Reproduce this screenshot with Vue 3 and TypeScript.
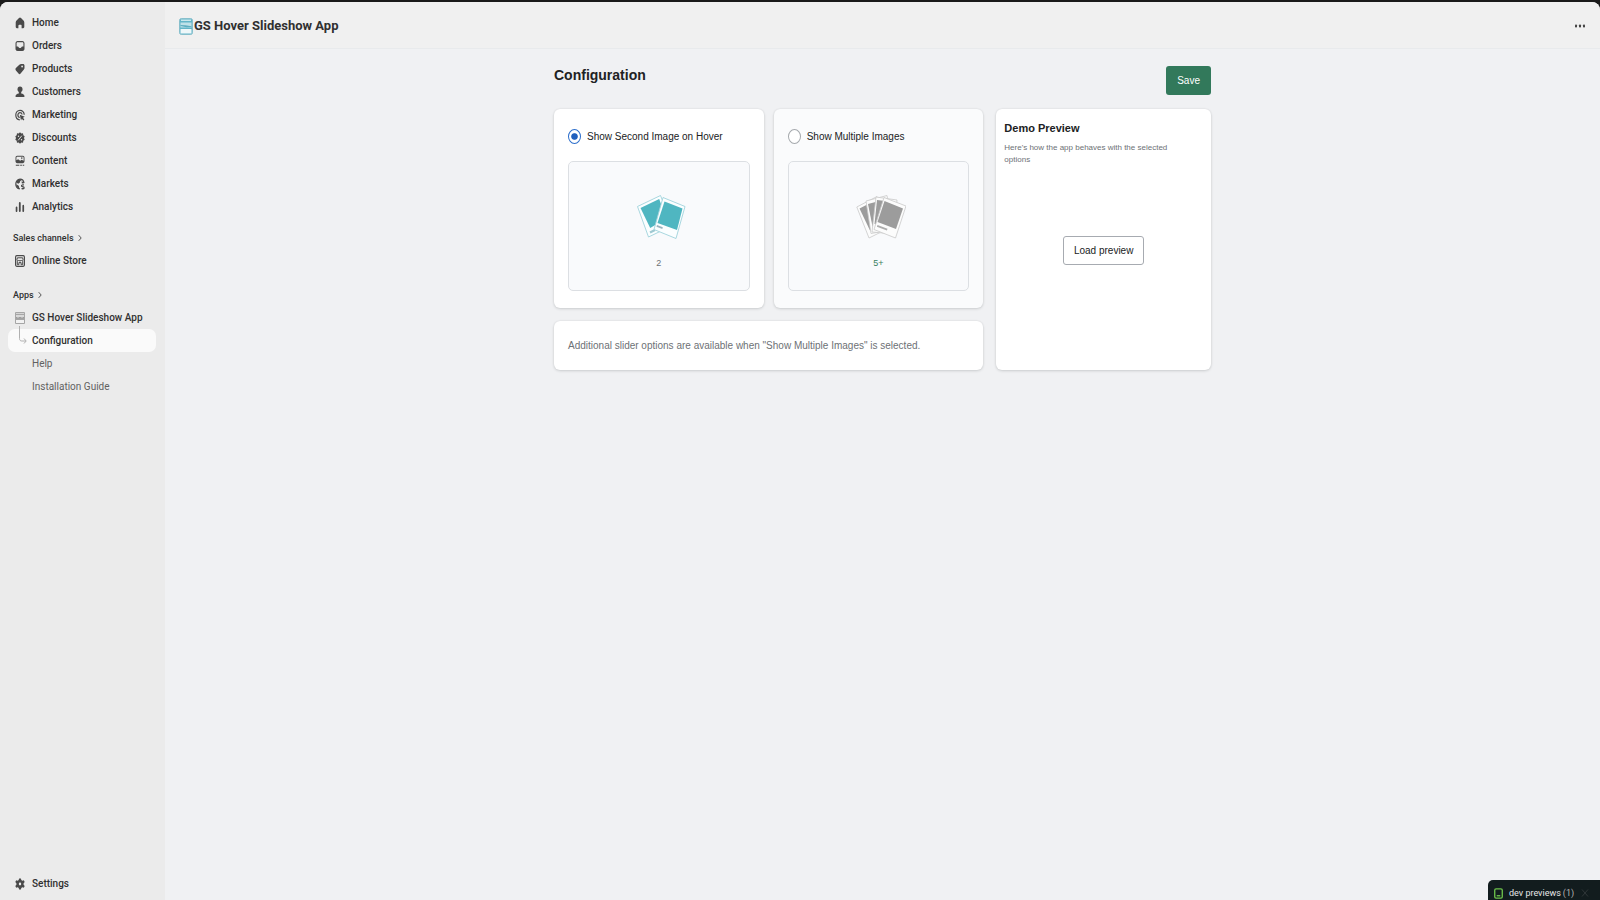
<script setup lang="ts">
import { ref } from 'vue'

interface NavItem {
  label: string
  icon: string
}

const mainNav: NavItem[] = [
  { label: 'Home', icon: 'home' },
  { label: 'Orders', icon: 'orders' },
  { label: 'Products', icon: 'products' },
  { label: 'Customers', icon: 'customers' },
  { label: 'Marketing', icon: 'marketing' },
  { label: 'Discounts', icon: 'discounts' },
  { label: 'Content', icon: 'content' },
  { label: 'Markets', icon: 'markets' },
  { label: 'Analytics', icon: 'analytics' },
]

const mode = ref<'hover' | 'multiple'>('hover')
</script>

<template>
  <div class="shell">
    <div class="frame">
      <aside class="sidebar">
        <nav class="nav" aria-label="Main">
          <a v-for="item in mainNav" :key="item.icon" href="#" class="nav-item">
            <svg class="icon" viewBox="0 0 10 12" aria-hidden="true">
              <path v-if="item.icon === 'home'" d="M4 .9a1.5 1.5 0 0 1 2 0l2.5 2.6c.5.5.8 1.3.8 2.1v4.2c0 .8-.5 1.4-1.2 1.4H6.600V8.700c0-.6-.4-1-.9-1H4.300c-.5 0-.9.4-.9 1v2.500H1.900C1.200 11.200.7 10.600.7 9.800V5.600c0-.8.3-1.600.8-2.100z" />
              <path v-else-if="item.icon === 'orders'" fill-rule="evenodd" d="M2.600 1h4.800C8.600 1 9.500 2 9.500 3.300v5.400C9.500 10 8.600 11 7.400 11H2.600C1.400 11 .5 10 .5 8.700V3.300C.5 2 1.400 1 2.600 1zm0 1.200c-.6 0-1 .5-1 1.100v3.200h1.200c.4 0 .6.300.8.700.2.400.6.700 1 .7h.8c.4 0 .8-.3 1-.7.2-.4.400-.7.800-.7h1.200V3.300c0-.6-.4-1.100-1-1.100z" />
              <path v-else-if="item.icon === 'products'" fill-rule="evenodd" d="M6.300.9h1.800c.8 0 1.400.7 1.400 1.600v2.300c0 .7-.2 1.300-.6 1.800l-3.300 4c-.6.700-1.500.700-2.100 0L.900 7.500c-.6-.7-.6-1.700 0-2.400l3.400-3.400c.6-.5 1.200-.8 2-.8zm.8 3.500a.9 1 0 1 0 0-2 .9 1 0 0 0 0 2z" />
              <g v-else-if="item.icon === 'customers'">
                <ellipse cx="5" cy="3.300" rx="2.500" ry="2.800" />
                <path d="M3.800 5.500h2.400v2c1.900.3 3.300 1.200 3.300 2.700 0 .5-.3.900-.8.900H1.300c-.5 0-.8-.4-.8-.9 0-1.500 1.400-2.400 3.300-2.700z" />
              </g>
              <g v-else-if="item.icon === 'marketing'">
                <path class="stroke" d="M4.800 10.800C2.500 10.700.8 8.700.8 6.100c0-2.700 1.800-4.800 4.200-4.800s4.200 2 4.200 4.400M4.800 8.500C3.700 8.400 2.900 7.400 2.900 6.100c0-1.400.9-2.500 2.100-2.500 1 0 1.900.8 2.100 1.900" />
                <path d="M4.800 5.800l5 2-1.900 1 1.500 1.800-1 1-1.600-1.900-.8 1.900z" />
              </g>
              <g v-else-if="item.icon === 'discounts'">
                <path d="M5 .3l1.300 1.200 1.700-.2.300 1.900 1.400 1L9 6l.7 1.800-1.400 1-.3 1.900-1.700-.2L5 11.700l-1.300-1.200-1.700.2-.3-1.900-1.400-1L1 6 .3 4.200l1.400-1L2 1.300l1.700.2z" />
                <path class="cut" d="M3.200 8.300l3.600-4.600" />
                <circle class="hole" cx="3.500" cy="4.200" r=".7" />
                <circle class="hole" cx="6.500" cy="7.800" r=".7" />
              </g>
              <g v-else-if="item.icon === 'content'">
                <path fill-rule="evenodd" d="M2.200.8h5.600c1 0 1.700.8 1.700 1.900v3.600c0 1.100-.7 1.900-1.700 1.900H2.200C1.200 8.200.5 7.400.5 6.300V2.700C.5 1.600 1.200.8 2.200.8zm0 1c-.4 0-.8.4-.8.900v2.500l1.700-1 2.100 1.500 1.500-1 1.900 1V2.700c0-.5-.4-.9-.8-.9z" />
                <circle cx="6.800" cy="3.100" r=".8" />
                <path d="M.8 9.700h3.500v1.100H.8zM5.200 9.700h1.700v1.100H5.200zM7.700 9.700h1.500v1.100H7.700z" />
              </g>
              <g v-else-if="item.icon === 'markets'">
                <path class="stroke" d="M9 5C8.700 2.900 7 1.200 5 1.200 2.700 1.200.8 3.400.8 6s1.700 4.600 4 4.800" />
                <path d="M1.200 4.500l2.100 1.300 1.600-1.200.3-1.700L7 1.900 4.700.9 2.200 2zM1.400 6.200l2.300 1.500.9 3.200-1.800-.6-1.600-2.600zM6.500 3.400l2 .4.700 1.400-2.300.3z" />
                <path class="stroke" d="M8.900 6.900H7.400c-.6 0-.9.400-.9.900s.3.800.8.900l1 .2c.5.1.8.4.8.9s-.4.900-.9.900H6.500M7.800 6.200v.7M7.800 10.700v.8" />
              </g>
              <path v-else d="M4.800 1c.6 0 .9.400.9 1v8c0 .6-.3 1-.9 1s-.9-.4-.9-1V2c0-.6.3-1 .9-1zM1.600 5.500c.5 0 .8.400.8 1V10c0 .6-.3 1-.8 1s-.9-.4-.9-1V6.500c0-.6.4-1 .9-1zM8.300 3.700c.5 0 .8.400.8 1V10c0 .6-.3 1-.8 1s-.9-.4-.9-1V4.700c0-.6.4-1 .9-1z" />
            </svg>
            <span>{{ item.label }}</span>
          </a>
        </nav>

        <section class="nav-group channels">
          <a href="#" class="group-title">
            Sales channels
            <svg class="chevron" viewBox="0 0 4 8" aria-hidden="true"><path d="M.7 1.200L3.200 4 .7 6.800" /></svg>
          </a>
          <a href="#" class="nav-item">
            <svg class="icon" viewBox="0 0 10 12" aria-hidden="true">
              <rect class="stroke" x=".6" y=".7" width="8.800" height="10.600" rx="1.200" />
              <path class="stroke thin" d="M2.400 2.800h5.200l.5 2c0 1.300-1.500 1.300-1.600.2-.1 1.200-2.900 1.200-3 0-.1 1.100-1.600 1.100-1.600-.2zM2.300 6.200v3.500h1.600V7.600h2.200v2.100h1.600V6.200" />
            </svg>
            <span>Online Store</span>
          </a>
        </section>

        <section class="nav-group">
          <a href="#" class="group-title">
            Apps
            <svg class="chevron" viewBox="0 0 4 8" aria-hidden="true"><path d="M.7 1.200L3.200 4 .7 6.800" /></svg>
          </a>
          <a href="#" class="nav-item">
            <svg class="icon" viewBox="0 0 10 12" aria-hidden="true">
              <rect x="0" y="0" width="10" height="12" rx="1" fill="#a6a6a6" />
              <rect x="1" y="1" width="8" height="1" fill="#d4d4d4" />
              <rect x="1" y="3" width="8" height="4" fill="#d9d9d9" />
              <path d="M1 5l2 .8L5 5l2 .8L9 5v1.700H1z" fill="#909090" />
              <rect x="1" y="8" width="8" height="3" fill="#f2f2f2" />
            </svg>
            <span>GS Hover Slideshow App</span>
          </a>
          <a href="#" class="nav-item sub active" aria-current="page">
            <svg class="branch" viewBox="0 0 10 20" aria-hidden="true">
              <path d="M1.500 0v12.500c0 1.500.8 2.500 2.300 2.500h4M6 12.500L8.200 15 6 17.500" />
            </svg>
            <span>Configuration</span>
          </a>
          <a href="#" class="nav-item sub">Help</a>
          <a href="#" class="nav-item sub">Installation Guide</a>
        </section>

        <a href="#" class="nav-item settings">
          <svg class="icon" viewBox="0 0 10 12" aria-hidden="true">
            <path fill-rule="evenodd" d="M4.100.5h1.800l.4 1.600 1 .6 1.500-.5.9 1.800-1.100 1.300v1.400l1.100 1.300-.9 1.800-1.500-.5-1 .6-.4 1.600H4.100l-.4-1.600-1-.6-1.500.5L.3 8l1.100-1.300V5.300L.3 4l.9-1.800 1.500.5 1-.6zM5 7.400A1.200 1.400 0 1 0 5 4.600a1.200 1.400 0 0 0 0 2.800z" />
          </svg>
          <span>Settings</span>
        </a>
      </aside>

      <main class="main">
        <header class="topbar">
          <svg class="app-logo" viewBox="0 0 14 17" aria-hidden="true">
            <rect x=".5" y=".5" width="13" height="16" rx="2" fill="#63b5c8" stroke="#87bfcc" />
            <rect x="2" y="1.500" width="10" height="1.500" fill="#cae7ec" />
            <rect x="1.500" y="4.500" width="11" height="5" fill="#bfe1e8" />
            <path d="M1.500 7l5 .2 6 1V9l-5 .2-6-1.200z" fill="#5eaec1" />
            <rect x="1.500" y="11" width="11" height="4.500" rx=".5" fill="#eef7f9" />
          </svg>
          <h1>GS Hover Slideshow App</h1>
          <button class="more" type="button" aria-label="More actions">
            <svg viewBox="0 0 10 4" aria-hidden="true">
              <rect x="0" y=".5" width="2" height="3" rx=".8" />
              <rect x="4" y=".5" width="2" height="3" rx=".8" />
              <rect x="8" y=".5" width="2" height="3" rx=".8" />
            </svg>
          </button>
        </header>

        <div class="page">
          <div class="page-head">
            <h2>Configuration</h2>
            <button class="save" type="button">Save</button>
          </div>

          <div class="columns">
            <div class="options">
              <div class="card option">
                <label class="choice">
                  <input v-model="mode" type="radio" name="mode" value="hover" />
                  Show Second Image on Hover
                </label>
                <div class="sample">
                  <svg class="photos" viewBox="0 0 50 46" aria-hidden="true">
                    <g stroke="#9fd3db" stroke-width=".9" fill="#fbfeff">
                      <path d="M1.500 12.500L24.500 1.500l12 30-24 11.500z" />
                      <path d="M4.500 14L23.200 5l7 19.500L14.200 34z" fill="#4fb6c1" stroke="none" />
                      <path d="M13.500 37.500l5-2.400 1 1.800-5 2.500z" fill="#9fc9d2" stroke="none" />
                      <path d="M27 3.500L49 12.500l-9 32L18 35.500z" />
                      <path d="M28.500 7.500l18 7-5.500 21.500L21.500 29z" fill="#4fb6c1" stroke="none" />
                      <path d="M21 31l5.800 2.300-.5 1.800-5.800-2.300z" fill="#9ab3be" stroke="none" />
                    </g>
                  </svg>
                  <span class="count">2</span>
                </div>
              </div>

              <div class="card option muted">
                <label class="choice">
                  <input v-model="mode" type="radio" name="mode" value="multiple" />
                  Show Multiple Images
                </label>
                <div class="sample">
                  <svg class="photos" viewBox="0 0 50 46" aria-hidden="true">
                    <g stroke="#c9c9c9" stroke-width=".8" fill="#fcfcfc">
                      <path d="M.8 13L21 2.500l13 31-21 10.500z" />
                      <path d="M3.500 14.500L20 6l8 20-14 10.500z" fill="#9c9c9c" stroke="none" />
                      <path d="M10 7L31 1.500l6 34-22 4z" />
                      <path d="M12 10l17-4.500 5 24-17.500 3z" fill="#9c9c9c" stroke="none" />
                      <path d="M20 3l21 3-3 34-22-2z" />
                      <path d="M21 6l17 2-3 24-16.500-2z" fill="#9c9c9c" stroke="none" />
                      <path d="M28 3.500l22 8.500-10.500 32L18 35.500z" />
                      <path d="M28.500 7l18.500 7.500-7 20.500-18.500-7z" fill="#9c9c9c" stroke="none" />
                      <path d="M21.500 31l10 3.800-.6 1.800-10-3.800z" fill="#adadad" stroke="none" />
                    </g>
                  </svg>
                  <span class="count green">5+</span>
                </div>
              </div>

              <p class="card note">Additional slider options are available when "Show Multiple Images" is selected.</p>
            </div>

            <section class="card preview">
              <h3>Demo Preview</h3>
              <p>Here's how the app behaves with the selected options</p>
              <div class="stage">
                <button class="load" type="button">Load preview</button>
              </div>
            </section>
          </div>
        </div>
      </main>
    </div>

    <div class="dev-bar">
      <svg viewBox="0 0 10 12" aria-hidden="true">
        <rect x=".8" y=".8" width="8.400" height="10.400" rx="1.500" />
        <path d="M3 8.500h4" />
      </svg>
      <span>dev previews</span>
      <span class="dev-count">(1)</span>
      <button type="button" aria-label="Close">
        <svg viewBox="0 0 8 10" aria-hidden="true"><path d="M1 1.500l6 7M7 1.500l-6 7" /></svg>
      </button>
    </div>
  </div>
</template>

<style>
body {
  margin: 0;
  background: #1a1a1a;
}
</style>

<style scoped>
.shell {
  box-sizing: border-box;
  min-height: 100vh;
  padding-top: 2px;
  display: flex;
  background: #1a1a1a;
  font-family: 'Liberation Sans', Arial, sans-serif;
  font-size: 10px;
  line-height: 16px;
  color: #303030;
}

.frame {
  flex: 1;
  display: flex;
  border-radius: 8px 8px 0 0;
  overflow: hidden;
  background: #f0f1f3;
}

a {
  color: inherit;
  text-decoration: none;
}

button {
  font: inherit;
  cursor: pointer;
}

h1, h2, h3, p {
  margin: 0;
}

.sidebar,
.topbar,
.dev-bar {
  font-family: Roboto, 'Liberation Sans', sans-serif;
}

.sidebar {
  box-sizing: border-box;
  flex: 0 0 165px;
  display: flex;
  flex-direction: column;
  padding: 9px 8px 5px;
  background: #ebebeb;
  white-space: nowrap;
}

.nav-item {
  display: flex;
  align-items: center;
  gap: 7px;
  height: 23px;
  padding-left: 7px;
  font-weight: 500;
}

.icon {
  flex: none;
  width: 10px;
  height: 12px;
  fill: #4a4a4a;
}

.icon .stroke {
  fill: none;
  stroke: #4a4a4a;
  stroke-width: 1.200;
}

.icon .thin {
  stroke-width: 1;
}

.icon .cut {
  stroke: #ebebeb;
  stroke-width: 0.900;
}

.icon .hole {
  fill: #ebebeb;
}

.nav-group {
  margin-top: 12px;
}

.channels {
  margin-top: 9px;
}

.group-title {
  display: flex;
  align-items: center;
  gap: 4px;
  height: 22px;
  padding-left: 5px;
  font-size: 9px;
  font-weight: 500;
}

.chevron {
  width: 4px;
  height: 8px;
  fill: none;
  stroke: #555;
}

.sub {
  position: relative;
  padding-left: 24px;
  margin-right: 1px;
  color: #616161;
  font-weight: 400;
}

.active {
  border-radius: 7px;
  background: #fafafa;
  color: #303030;
  font-weight: 500;
}

.branch {
  position: absolute;
  left: 10px;
  top: -3px;
  width: 10px;
  height: 20px;
  fill: none;
  stroke: #b0b0b0;
}

.settings {
  margin-top: auto;
}

.main {
  flex: 1;
  min-width: 0;
}

.topbar {
  box-sizing: border-box;
  display: flex;
  align-items: center;
  height: 47px;
  padding: 2px 15px 0 14px;
  border-bottom: 1px solid #e8eaec;
  background: #f0f0f0;
}

.app-logo {
  width: 14px;
  height: 17px;
}

h1 {
  flex: 1;
  padding-left: 1px;
  font-size: 13px;
  font-weight: 700;
  line-height: 20px;
}

.more {
  display: flex;
  padding: 0;
  border: 0;
  background: none;
}

.more svg {
  width: 10px;
  height: 4px;
  fill: #444;
}

.page {
  max-width: 657px;
  margin: 0 auto;
  padding: 17px 16px;
}

.page-head {
  display: flex;
  justify-content: space-between;
  margin-bottom: 14px;
  color: #202223;
}

h2 {
  font-size: 14px;
  line-height: 18px;
}

.save {
  height: 29px;
  padding: 0 11px;
  border: 0;
  border-radius: 3px;
  background: #32795b;
  color: #fff;
}

.columns {
  display: grid;
  grid-template-columns: 2fr 1fr;
  gap: 13px;
}

.options {
  display: grid;
  grid-template-columns: 1fr 1fr;
  gap: 13px 10px;
}

.card {
  border-radius: 6px;
  background: #fff;
  box-shadow: 0 1px 3px rgba(23, 24, 24, 0.150), 0 0 2px rgba(23, 24, 24, 0.080);
  color: #202223;
}

.option {
  padding: 19px 14px 17px;
}

.muted {
  background: #fafbfc;
}

.choice {
  display: flex;
  align-items: center;
  gap: 6px;
  line-height: 17px;
}

.choice input {
  appearance: none;
  box-sizing: border-box;
  width: 13px;
  height: 15px;
  margin: 0;
  border: 1px solid #a5a9ad;
  border-radius: 50%;
  background: #fff;
}

.choice input:checked {
  border-color: #2c6ecb;
  background: radial-gradient(circle 4px, #1f5fbd 70%, #fff 95%);
}

.sample {
  box-sizing: border-box;
  display: flex;
  flex-direction: column;
  align-items: center;
  height: 130px;
  margin-top: 16px;
  padding-top: 32px;
  border: 1px solid #dcdfe3;
  border-radius: 5px;
  background: #f9fafc;
}

.photos {
  width: 50px;
  height: 46px;
  margin-left: 5px;
}

.count {
  margin-top: 15px;
  font-size: 9px;
  color: #6d7175;
}

.green {
  color: #38805f;
}

.note {
  grid-column: 1 / -1;
  padding: 17px 14px 16px;
  color: #6d7175;
}

.preview {
  display: flex;
  flex-direction: column;
  padding: 11px 8px;
}

h3 {
  font-size: 11px;
}

.preview p {
  margin-top: 6px;
  padding-right: 24px;
  font-size: 8px;
  line-height: 12px;
  color: #6d7175;
}

.stage {
  flex: 1;
  display: flex;
  justify-content: center;
  align-items: flex-start;
  padding-top: 70px;
}

.load {
  height: 29px;
  padding: 0 10px;
  border: 1px solid #a7abb1;
  border-radius: 3px;
  background: #fff;
  color: #202223;
}

.dev-bar {
  position: fixed;
  right: 0;
  bottom: 0;
  box-sizing: border-box;
  display: flex;
  align-items: center;
  width: 112px;
  height: 20px;
  padding: 6px 11px 0 6px;
  border-radius: 5px 0 0 0;
  background: #121c1e;
  color: #e6e6e6;
  font-size: 9px;
  line-height: 12px;
  white-space: nowrap;
}

.dev-bar svg {
  width: 9px;
  height: 11px;
  margin-right: 6px;
  fill: none;
  stroke: #6cc04a;
  stroke-width: 1.500;
}

.dev-count {
  margin-left: 2px;
  color: #b5b5b5;
}

.dev-bar button {
  display: flex;
  margin-left: auto;
  padding: 0;
  border: 0;
  background: none;
}

.dev-bar button svg {
  width: 8px;
  height: 10px;
  margin: 0;
  stroke: #2f3638;
  stroke-width: 1;
}
</style>
